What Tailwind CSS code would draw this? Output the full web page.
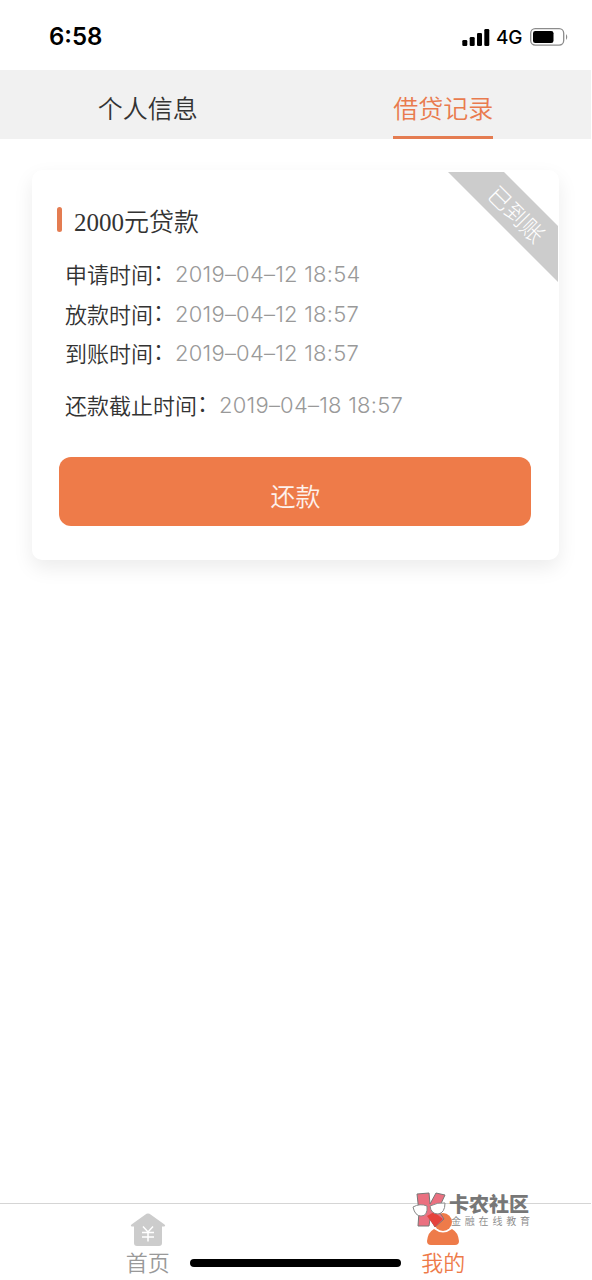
<!DOCTYPE html>
<html lang="zh-CN">
<head>
<meta charset="utf-8">
<title>借贷记录</title>
<script src="https://cdn.jsdelivr.net/npm/@tailwindcss/browser@4"></script>
</head>
<body class="bg-white">
<div class="relative flex h-[1280px] w-[591px] flex-col overflow-hidden bg-white font-['Noto_Sans_CJK_SC',sans-serif] font-[350] text-[#333]">
  <header class="flex h-[70px] shrink-0 items-center justify-between pt-1 pr-[22px] pl-[49px] text-black">
    <span class="font-['Inter',sans-serif] text-[24px] leading-none font-semibold">6:58</span>
    <div class="flex items-center">
      <svg class="h-[17px] w-[28px]" viewBox="0 0 28 17"><rect x="0.3" y="11" width="5" height="6" rx="1.3"/><rect x="7.7" y="8" width="5" height="9" rx="1.3"/><rect x="15" y="4" width="5" height="13" rx="1.3"/><rect x="22.3" y="0" width="5" height="17" rx="1.3"/></svg>
      <span class="ml-[6px] w-[34px] font-['Inter',sans-serif] text-[19px] leading-none font-medium tracking-[-0.3px]">4G</span>
      <svg class="h-[18px] w-[39px]" viewBox="0 0 39 18"><rect x="0.7" y="0.7" width="33" height="16.4" rx="4.5" fill="none" stroke="#8c8c8c" stroke-width="1.3"/><rect x="3" y="3" width="20.5" height="12" rx="2.3"/><path d="M36 6Q38.5 9 36 12Z" fill="#8c8c8c"/></svg>
    </div>
  </header>

  <nav class="grid h-[69px] shrink-0 grid-cols-2 bg-[#f1f1f1] text-[25px]">
    <div class="flex justify-center"><span class="pt-[9px] leading-[57px]">个人信息</span></div>
    <div class="flex justify-center"><span class="h-full border-b-[3px] border-[#e47c51] pt-[9px] leading-[57px] text-[#e97b4e]">借贷记录</span></div>
  </nav>

  <main class="grow px-8 pt-[31px]">
    <section class="relative flex h-[390px] flex-col rounded-[10px] bg-white px-[27px] pt-[33px] shadow-[0_8px_20px_rgba(0,0,0,0.08)]">
      <svg class="absolute top-[2px] right-[1px] h-[110px] w-[110px]" viewBox="0 0 110 110">
        <path d="M0 0H56L110 54V110Z" fill="#ccc"/>
        <text x="0" y="0" transform="translate(69.5 41.5) rotate(45)" text-anchor="middle" dominant-baseline="central" class="fill-white text-[23px] font-light">已到账</text>
      </svg>
      <h1 class="-ml-[2px] flex h-[36px] items-center text-[25px] font-[350]">
        <span class="mb-[4px] h-[25px] w-[5px] rounded-full bg-[#e47c51]"></span>
        <span class="ml-[12px] pt-[4px] leading-[36px] font-['Liberation_Serif','Noto_Sans_CJK_SC',serif]">2000元贷款</span>
      </h1>
      <dl class="mt-[15px] ml-[6px] text-[22px] leading-[39.5px]">
        <div class="flex"><dt>申请时间<span class="relative -top-[3px]">：</span></dt><dd class="pt-px font-['Inter',sans-serif] tracking-[0.22px] text-[#999]">2019–04–12 18:54</dd></div>
        <div class="-mt-px flex"><dt>放款时间<span class="relative -top-[3px]">：</span></dt><dd class="pt-px font-['Inter',sans-serif] tracking-[0.22px] text-[#999]">2019–04–12 18:57</dd></div>
        <div class="-mt-px flex"><dt>到账时间<span class="relative -top-[3px]">：</span></dt><dd class="pt-px font-['Inter',sans-serif] tracking-[0.22px] text-[#999]">2019–04–12 18:57</dd></div>
        <div class="mt-[11px] flex"><dt>还款截止时间<span class="relative -top-[3px]">：</span></dt><dd class="pt-px font-['Inter',sans-serif] tracking-[0.22px] text-[#999]">2019–04–18 18:57</dd></div>
      </dl>
      <button class="mt-auto mb-[34px] h-[69px] w-[472px] rounded-[12px] bg-[#ee7b49] pt-[8px] pl-[1px] text-[25px] font-[350] text-white/90">还款</button>
    </section>
  </main>

  <footer class="grid h-[77px] shrink-0 grid-cols-2 border-t border-[#d5d5d5] pt-[9px] text-[22px] leading-[30px]">
    <div class="flex flex-col items-center text-[#999]">
      <svg class="h-[34px] w-[36px]" viewBox="0 0 36 34"><path d="M16.5 .8Q18 0 19.5 .8L34.5 11.5Q36 13.300 34 13.500H32V30Q32 33 29 33H7Q4 33 4 30V13.500H2Q0 13.300 1.500 11.500Z" fill="#ccc"/><path d="M13 13.500L18 19L23 13.500M18 19V28.500M12 19.500H24M12 24H24" fill="none" stroke="#fff" stroke-width="1.500"/></svg>
      <span class="-mt-px">首页</span>
    </div>
    <div class="flex flex-col items-center text-[#ee7b49]">
      <svg class="h-[34px] w-[34px]" viewBox="0 0 34 34"><circle cx="17" cy="9" r="9" fill="#ee7b49"/><path d="M8 16Q17 23 26 16Q32 19 33 28Q33 32 29 32H5Q1 32 1 28Q2 19 8 16Z" fill="#ee7b49"/></svg>
      <span class="-mt-px">我的</span>
    </div>
  </footer>

  <div class="absolute top-[1259px] left-[190px] h-[8px] w-[211px] rounded-full bg-black"></div>
  <div class="absolute top-[1192px] left-[412px] flex">
    <svg class="h-[38px] w-[35px]" viewBox="0 0 35 38">
      <path d="M5 2 17 1 18 12 24 1 33 3 26 18 32 27 23 35 18 27 17 34H6L7 20Z" fill="#ea7080" stroke="#777" stroke-width="1"/>
      <path d="M15 24L22 20L31 27L23 35Z" fill="#e5423c"/>
      <path d="M1 15Q8 11 15 14Q16 24 9 24Q3 24 1 15ZM18 14Q26 10 33 11Q33 21 26 22Q19 22 18 14Z" fill="#fff" stroke="#888" stroke-width="1"/>
    </svg>
    <div class="ml-[2px] pt-px whitespace-nowrap text-[#777]">
      <div class="text-[20px] leading-[22px] font-black">卡农社区</div>
      <div class="ml-[2px] pt-px text-[10px] leading-[10px] tracking-[3.8px] text-[#888]">金融在线教育</div>
    </div>
  </div>
</div>
</body>
</html>
